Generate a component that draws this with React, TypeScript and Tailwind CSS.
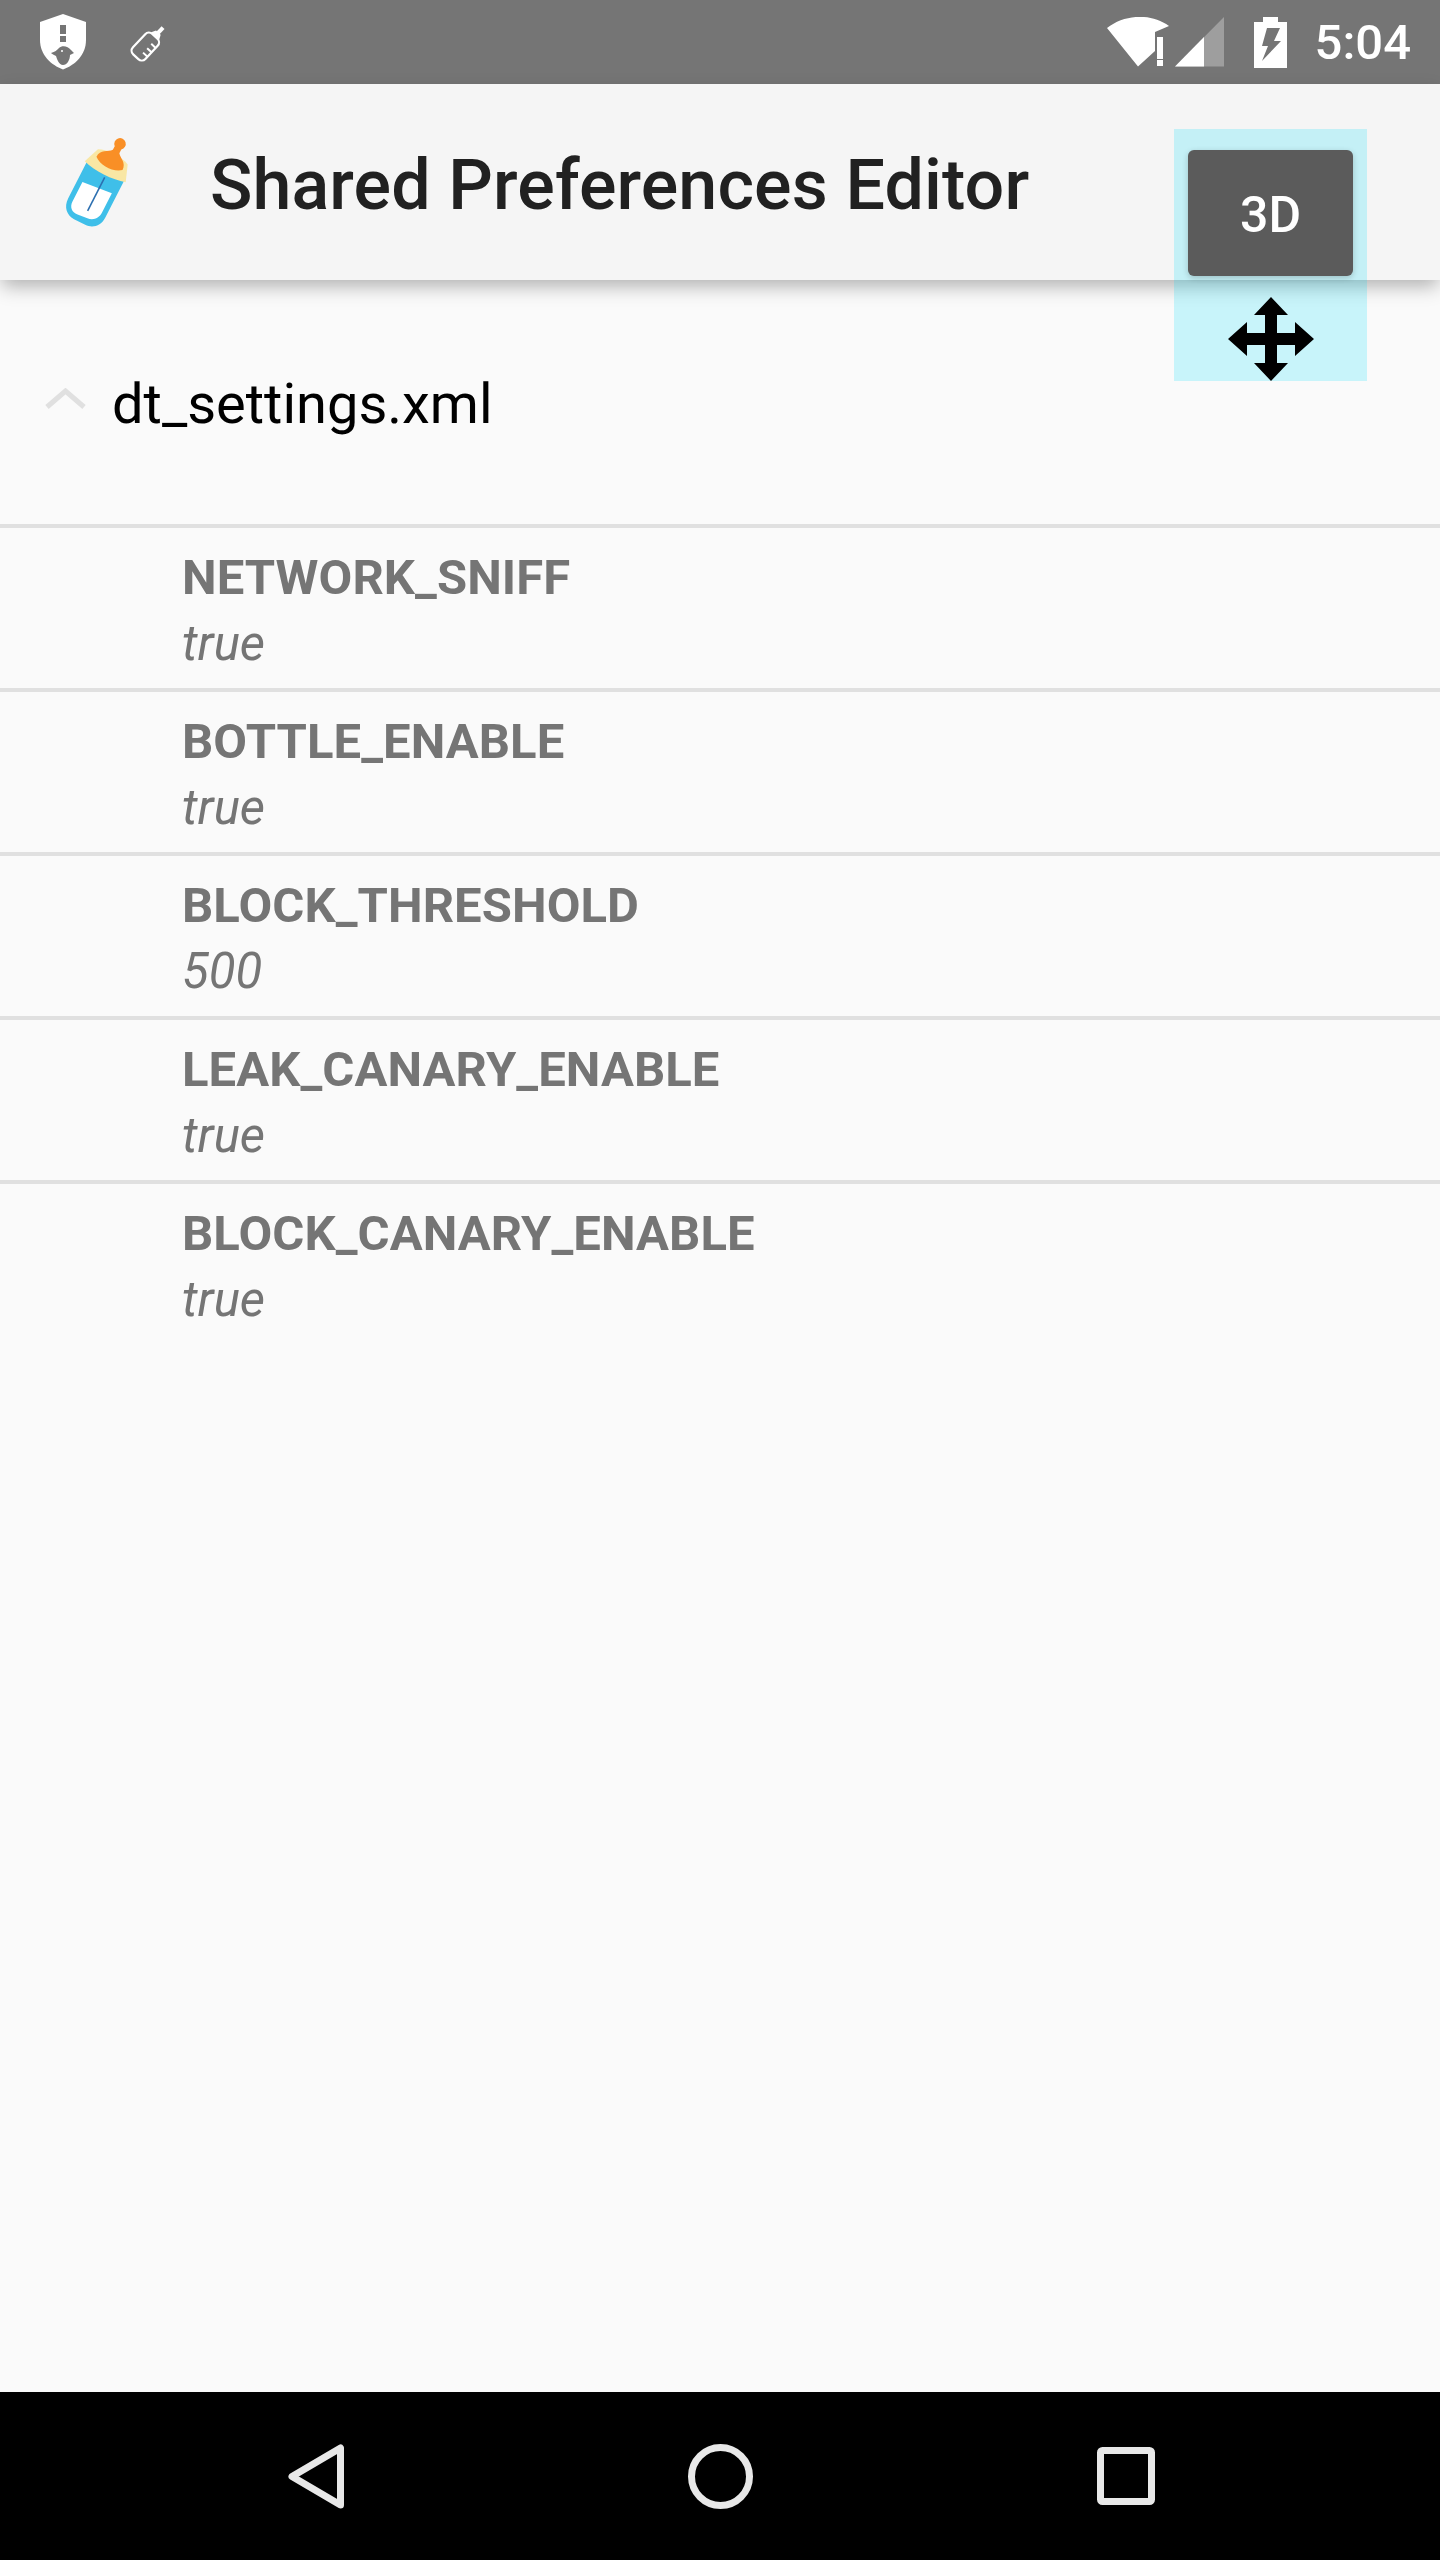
const prefs = [
  { key: "NETWORK_SNIFF", value: "true" },
  { key: "BOTTLE_ENABLE", value: "true" },
  { key: "BLOCK_THRESHOLD", value: "500" },
  { key: "LEAK_CANARY_ENABLE", value: "true" },
  { key: "BLOCK_CANARY_ENABLE", value: "true" },
];

function ShieldIcon() {
  return (
    <svg width="46" height="56" viewBox="0 0 46 56" className="ml-[40px] shrink-0">
      <path d="M23 0 L46 8 V26 C46 41 35 51 23 55.500 C11 51 0 41 0 26 V8 Z" fill="#fff" />
      <rect x="20" y="11" width="6" height="9" fill="#757575" />
      <rect x="20" y="22" width="6" height="6" fill="#757575" />
      <path d="M11 39 C15 38 17 36 19 34 C22 31 28 32 31 36 L34 39 L30 41 C30 46 27 51 23 51 C19 51 17 45 16 42 C14 41 12 40 11 39 Z" fill="#757575" />
      <circle cx="22" cy="37" r="1" fill="#fff" />
    </svg>
  );
}

function SmallBottleIcon() {
  return (
    <svg width="40" height="40" viewBox="0 0 40 40" className="ml-[42px] shrink-0">
      <g transform="translate(-1 2) rotate(43 20 20)" fill="none" stroke="#fff" strokeWidth="2.200">
        <rect x="12" y="9" width="17" height="28" rx="5" />
        <path d="M16 9 L18 5 H23 L25 9" fill="#fff" />
        <rect x="18.500" y="-3" width="4" height="8" fill="#fff" stroke="none" />
        <path d="M23 17 H29 M23 23 H29 M23 29 H29" strokeWidth="2" />
      </g>
    </svg>
  );
}

function WifiIcon() {
  return (
    <svg width="62" height="50" viewBox="0 0 62 50" className="shrink-0">
      <path d="M0 11 C18 -3 44 -4 62 9 L48 15 V34 L31 49.500 Z" fill="#fff" />
      <rect x="50" y="20" width="6" height="22" fill="#fff" />
      <rect x="50" y="43" width="6" height="6" fill="#fff" />
    </svg>
  );
}

function SignalIcon() {
  return (
    <svg width="49" height="50" viewBox="0 0 49 50" className="ml-[6px] shrink-0">
      <path d="M49 0 V49.500 H0 Z" fill="#fff" fillOpacity="0.3" />
      <path d="M29 20 V49.500 H0 Z" fill="#fff" />
    </svg>
  );
}

function BatteryIcon() {
  return (
    <svg width="33" height="51" viewBox="0 0 33 51" className="ml-[30px] shrink-0">
      <path d="M9 0 H24 V5 H33 V51 H0 V5 H9 Z" fill="#fff" />
      <path d="M13 11 H26 L20 24 H27 L8 44 L14 29 H8 Z" fill="#757575" />
    </svg>
  );
}

function StatusBar() {
  return (
    <div className="flex h-[84px] shrink-0 items-center bg-[#757575]">
      <ShieldIcon />
      <SmallBottleIcon />
      <div className="ml-auto flex items-center pr-[29px]">
        <WifiIcon />
        <SignalIcon />
        <BatteryIcon />
        <span className="ml-[28px] text-[49px] leading-[57px] font-medium text-white">5:04</span>
      </div>
    </div>
  );
}

function BottleLogo() {
  return (
    <svg width="80" height="94" viewBox="-38 -45 76 90" className="shrink-0">
      <g transform="rotate(27)">
        <path d="M-20 -14 H20 V28 C20 37 14 43 6 43 H-6 C-14 43 -20 37 -20 28 Z" fill="#3fbfe9" />
        <path d="M-15 6 H15 V27 C15 33 11 37 5 37 H-5 C-11 37 -15 33 -15 27 Z" fill="#fff" transform="skewY(-6)" />
        <line x1="2" y1="-6" x2="2" y2="30" stroke="#2c6fb0" strokeWidth="1.500" />
        <path d="M-16 -27 C-8 -31 8 -31 16 -27 L22 -11 C10 -7 -10 -7 -22 -11 Z" fill="#f9e7a4" />
        <path d="M-14 -20 C-14 -28 -6 -29 -3 -33 L-3 -37 A5.500 5.500 0 1 1 4 -37 L4 -33 C7 -29 14 -28 14 -20 C7 -14 -7 -14 -14 -20 Z" fill="#f98f26" />
      </g>
    </svg>
  );
}

function AppBar() {
  return (
    <header className="relative z-10 flex h-[196px] shrink-0 items-center bg-[#f5f5f5] pl-[60px] shadow-[0_8px_18px_-2px_rgba(0,0,0,0.3)]">
      <BottleLogo />
      <h1 className="mt-[6px] ml-[70px] text-[70px] leading-[82px] font-medium tracking-[0.12px] text-[#212121]">
        Shared Preferences Editor
      </h1>
    </header>
  );
}

function PrefRow({ name, value, last }: { name: string; value: string; last: boolean }) {
  return (
    <div className={last ? "h-[160px] pt-[21px] pl-[182px]" : "h-[164px] border-b-4 border-[#e0e0e0] pt-[21px] pl-[182px]"}>
      <p className="text-[49px] leading-[57px] font-bold tracking-[0.08px] text-[#757575]">{name}</p>
      <p className="mt-[9px] text-[49px] leading-[57px] text-[#757575] italic">{value}</p>
    </div>
  );
}

function MoveIcon() {
  return (
    <svg width="86" height="84" viewBox="0 0 86 84" className="mt-[21px] shrink-0">
      <path
        d="M43 0 L60 18 H49 V36 H67 V25 L86 42 L67 59 V48 H49 V66 H60 L43 84 L26 66 H37 V48 H19 V59 L0 42 L19 25 V36 H37 V18 H26 Z"
        fill="#000"
      />
    </svg>
  );
}

function FloatingWidget() {
  return (
    <div className="absolute top-[129px] left-[1174px] z-20 flex h-[252px] w-[193px] flex-col items-center bg-[rgba(0,220,250,0.2)] pt-[21px]">
      <div className="flex h-[126px] w-[165px] items-center justify-center rounded-[6px] bg-[#5b5b5b] pt-[4px] text-[50px] font-medium text-white shadow-[0_2px_6px_rgba(0,0,0,0.2)]">
        3D
      </div>
      <MoveIcon />
    </div>
  );
}

function NavBar() {
  return (
    <nav className="flex h-[168px] shrink-0 items-start bg-black pt-[52px] pl-[288px]">
      <svg width="56" height="65" viewBox="0 0 56 65" className="shrink-0">
        <path d="M52.500 4 V61 L4 32.500 Z" fill="none" stroke="#e8e8e8" strokeWidth="7" strokeLinejoin="round" />
      </svg>
      <svg width="65" height="65" viewBox="0 0 65 65" className="ml-[344px] shrink-0">
        <circle cx="32.500" cy="32.500" r="29" fill="none" stroke="#e8e8e8" strokeWidth="7" />
      </svg>
      <svg width="58" height="58" viewBox="0 0 58 58" className="mt-[3px] ml-[344px] shrink-0">
        <rect x="3.500" y="3.500" width="51" height="51" rx="2" fill="none" stroke="#e8e8e8" strokeWidth="7" />
      </svg>
    </nav>
  );
}

export default function App() {
  return (
    <div className="relative flex h-[2560px] w-[1440px] flex-col overflow-hidden bg-[#fafafa] font-['Roboto',sans-serif]">
      <StatusBar />
      <AppBar />
      <main className="flex-1">
        <div className="flex h-[248px] items-start border-b-4 border-[#e0e0e0] pl-[45px]">
          <svg width="41" height="21" viewBox="0 0 41 21" className="mt-[108px] shrink-0">
            <path d="M2 19 L20.500 3 L39 19" fill="none" stroke="#e0e0e0" strokeWidth="5" />
          </svg>
          <span className="mt-[91px] ml-[26px] text-[56px] leading-[66px] text-black">dt_settings.xml</span>
        </div>
        {prefs.map((p, i) => (
          <PrefRow key={p.key} name={p.key} value={p.value} last={i === prefs.length - 1} />
        ))}
      </main>
      <NavBar />
      <FloatingWidget />
    </div>
  );
}
